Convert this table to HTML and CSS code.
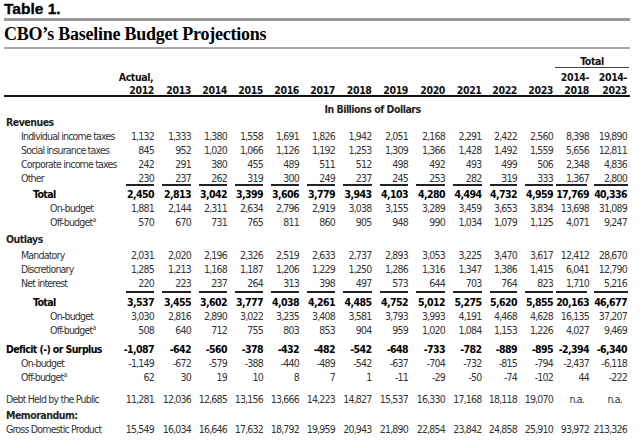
FILE: index.html
```html
<!DOCTYPE html>
<html>
<head>
<meta charset="utf-8">
<link rel="stylesheet" href="styles.css">
</head>
<body>
<div class="page">
  <div class="t1">Table 1.</div>
  <div class="rule-gray"></div>
  <div class="title">CBO’s Baseline Budget Projections</div>
  <div class="rule-light"></div>

  <div class="row head h-total"><span class="lbl"></span><span class="total-hd">Total</span></div>
  <div class="row head h-actual"><span class="lbl"></span><span class="c">Actual,</span><span></span><span></span><span></span><span></span><span></span><span></span><span></span><span></span><span></span><span></span><span></span><span>2014-</span><span>2014-</span></div>
  <div class="row head h-years"><span class="lbl"></span><span>2012</span><span>2013</span><span>2014</span><span>2015</span><span>2016</span><span>2017</span><span>2018</span><span>2019</span><span>2020</span><span>2021</span><span>2022</span><span>2023</span><span>2018</span><span>2023</span></div>
  <div class="rule-dark"></div>

  <div class="row units"><span class="lbl"></span><span class="units-txt">In Billions of Dollars</span></div>

  <div class="row sec rev"><span class="lbl">Revenues</span></div>
  <div class="row"><span class="lbl i1">Individual income taxes</span><span>1,132</span><span>1,333</span><span>1,380</span><span>1,558</span><span>1,691</span><span>1,826</span><span>1,942</span><span>2,051</span><span>2,168</span><span>2,291</span><span>2,422</span><span>2,560</span><span>8,398</span><span>19,890</span></div>
  <div class="row"><span class="lbl i1">Social insurance taxes</span><span>845</span><span>952</span><span>1,020</span><span>1,066</span><span>1,126</span><span>1,192</span><span>1,253</span><span>1,309</span><span>1,366</span><span>1,428</span><span>1,492</span><span>1,559</span><span>5,656</span><span>12,811</span></div>
  <div class="row"><span class="lbl i1">Corporate income taxes</span><span>242</span><span>291</span><span>380</span><span>455</span><span>489</span><span>511</span><span>512</span><span>498</span><span>492</span><span>493</span><span>499</span><span>506</span><span>2,348</span><span>4,836</span></div>
  <div class="row"><span class="lbl i1">Other</span><span>230</span><span>237</span><span>262</span><span>319</span><span>300</span><span>249</span><span>237</span><span>245</span><span>253</span><span>282</span><span>319</span><span>333</span><span>1,367</span><span>2,800</span></div>
  <div class="row uline"><span></span><i></i><i></i><i></i><i></i><i></i><i></i><i></i><i></i><i></i><i></i><i></i><i></i><i class="t"></i><i class="t2"></i></div>
  <div class="row bold tot1"><span class="lbl i2">Total</span><span>2,450</span><span>2,813</span><span>3,042</span><span>3,399</span><span>3,606</span><span>3,779</span><span>3,943</span><span>4,103</span><span>4,280</span><span>4,494</span><span>4,732</span><span>4,959</span><span>17,769</span><span>40,336</span></div>
  <div class="row"><span class="lbl i3">On-budget</span><span>1,881</span><span>2,144</span><span>2,311</span><span>2,634</span><span>2,796</span><span>2,919</span><span>3,038</span><span>3,155</span><span>3,289</span><span>3,459</span><span>3,653</span><span>3,834</span><span>13,698</span><span>31,089</span></div>
  <div class="row"><span class="lbl i3">Off-budget<sup class="fn">a</sup></span><span>570</span><span>670</span><span>731</span><span>765</span><span>811</span><span>860</span><span>905</span><span>948</span><span>990</span><span>1,034</span><span>1,079</span><span>1,125</span><span>4,071</span><span>9,247</span></div>

  <div class="row sec out"><span class="lbl">Outlays</span></div>
  <div class="row first"><span class="lbl i1">Mandatory</span><span>2,031</span><span>2,020</span><span>2,196</span><span>2,326</span><span>2,519</span><span>2,633</span><span>2,737</span><span>2,893</span><span>3,053</span><span>3,225</span><span>3,470</span><span>3,617</span><span>12,412</span><span>28,670</span></div>
  <div class="row"><span class="lbl i1">Discretionary</span><span>1,285</span><span>1,213</span><span>1,168</span><span>1,187</span><span>1,206</span><span>1,229</span><span>1,250</span><span>1,286</span><span>1,316</span><span>1,347</span><span>1,386</span><span>1,415</span><span>6,041</span><span>12,790</span></div>
  <div class="row"><span class="lbl i1">Net interest</span><span>220</span><span>223</span><span>237</span><span>264</span><span>313</span><span>398</span><span>497</span><span>573</span><span>644</span><span>703</span><span>764</span><span>823</span><span>1,710</span><span>5,216</span></div>
  <div class="row uline u2"><span></span><i></i><i></i><i></i><i></i><i></i><i></i><i></i><i></i><i></i><i></i><i></i><i></i><i class="t"></i><i class="t2"></i></div>
  <div class="row bold tot2"><span class="lbl i2">Total</span><span>3,537</span><span>3,455</span><span>3,602</span><span>3,777</span><span>4,038</span><span>4,261</span><span>4,485</span><span>4,752</span><span>5,012</span><span>5,275</span><span>5,620</span><span>5,855</span><span>20,163</span><span>46,677</span></div>
  <div class="row"><span class="lbl i3">On-budget</span><span>3,030</span><span>2,816</span><span>2,890</span><span>3,022</span><span>3,235</span><span>3,408</span><span>3,581</span><span>3,793</span><span>3,993</span><span>4,191</span><span>4,468</span><span>4,628</span><span>16,135</span><span>37,207</span></div>
  <div class="row"><span class="lbl i3">Off-budget<sup class="fn">a</sup></span><span>508</span><span>640</span><span>712</span><span>755</span><span>803</span><span>853</span><span>904</span><span>959</span><span>1,020</span><span>1,084</span><span>1,153</span><span>1,226</span><span>4,027</span><span>9,469</span></div>

  <div class="row bold def"><span class="lbl">Deficit (-) or Surplus</span><span>-1,087</span><span>-642</span><span>-560</span><span>-378</span><span>-432</span><span>-482</span><span>-542</span><span>-648</span><span>-733</span><span>-782</span><span>-889</span><span>-895</span><span>-2,394</span><span>-6,340</span></div>
  <div class="row"><span class="lbl i1">On-budget</span><span>-1,149</span><span>-672</span><span>-579</span><span>-388</span><span>-440</span><span>-489</span><span>-542</span><span>-637</span><span>-704</span><span>-732</span><span>-815</span><span>-794</span><span>-2,437</span><span>-6,118</span></div>
  <div class="row"><span class="lbl i1">Off-budget<sup class="fn">a</sup></span><span>62</span><span>30</span><span>19</span><span>10</span><span>8</span><span>7</span><span>1</span><span>-11</span><span>-29</span><span>-50</span><span>-74</span><span>-102</span><span>44</span><span>-222</span></div>

  <div class="row debt"><span class="lbl">Debt Held by the Public</span><span>11,281</span><span>12,036</span><span>12,685</span><span>13,156</span><span>13,666</span><span>14,223</span><span>14,827</span><span>15,537</span><span>16,330</span><span>17,168</span><span>18,118</span><span>19,070</span><span class="na">n.a.</span><span class="na">n.a.</span></div>

  <div class="row sec memo"><span class="lbl">Memorandum:</span></div>
  <div class="row"><span class="lbl">Gross Domestic Product</span><span>15,549</span><span>16,034</span><span>16,646</span><span>17,632</span><span>18,792</span><span>19,959</span><span>20,943</span><span>21,890</span><span>22,854</span><span>23,842</span><span>24,858</span><span>25,910</span><span>93,972</span><span>213,326</span></div>
</div>
</body>
</html>
```
FILE: styles.css
```css
body {
  margin: 0;
  background: #fff;
  font-family: "DejaVu Sans Condensed", "Liberation Sans", sans-serif;
  font-size: 10.5px;
  letter-spacing: -0.8px;
  color: #333;
}
.page {
  margin-left: 4px;
  width: 626px;
}
.t1 {
  font-family: "Liberation Sans", Arial, sans-serif;
  font-weight: bold;
  font-size: 15.5px;
  line-height: 18px;
  letter-spacing: 0;
  color: #000;
  -webkit-text-stroke: 0.3px #000;
}
.rule-gray {
  height: 3px;
  background: #999;
}
.title {
  font-family: "Liberation Serif", "Times New Roman", serif;
  font-weight: bold;
  font-size: 18px;
  line-height: 26px;
  letter-spacing: -0.25px;
  color: #000;
}
.rule-light {
  height: 2px;
  background: #aaa;
}
.rule-dark {
  height: 2px;
  background: #111;
}
.row {
  display: grid;
  grid-template-columns: 114px 36px 37px 36px 36px 36px 36px 36.5px 36.5px 37px 36.5px 35.5px 36px 36px 38px;
  grid-template-rows: 14px;
  height: 14px;
  line-height: 14px;
  white-space: nowrap;
}
.row > span {
  text-align: right;
  padding-top: 1px;
}
.row > .lbl {
  text-align: left;
}
.head {
  font-weight: bold;
  color: #111;
  letter-spacing: -0.4px;
}
.head > span {
  padding-top: 2px;
}
.h-total {
  margin-top: 6px;
  height: 13px;
  grid-template-rows: 13px;
  line-height: 13px;
}
.h-total > span {
  padding-top: 0;
}
.total-hd {
  grid-column: 14 / 16;
  text-align: center !important;
  border-bottom: 1px solid #444;
  margin-left: 2px;
  margin-right: -2px;
}
.h-actual .c {
  text-align: center;
}
.h-years {
  height: 13px;
  grid-template-rows: 13px;
  line-height: 13px;
}
.units {
  margin-top: 3px;
  font-weight: bold;
  color: #222;
  letter-spacing: -0.5px;
}
.units > span {
  padding-top: 2px;
}
.units-txt {
  grid-column: 2 / 16;
  text-align: center !important;
}
.sec {
  font-weight: bold;
  color: #222;
  letter-spacing: -0.5px;
}
.sec .lbl {
  padding-left: 2px;
}
.out {
  margin-top: 3px;
}
.first {
  margin-top: 2px;
}
.memo {
  margin-top: 2px;
}
.i1 {
  padding-left: 17px;
}
.i2 {
  padding-left: 29px;
}
.i3 {
  padding-left: 46px;
}
.lbl:not(.i1):not(.i2):not(.i3) {
  padding-left: 2px;
}
.bold {
  font-weight: bold;
  color: #000;
  letter-spacing: -0.6px;
}
.tot1 {
  margin-top: 0;
}
.tot2 {
  margin-top: 1px;
}
.def {
  margin-top: 5px;
}
.debt {
  margin-top: 8px;
}
.uline {
  height: 2px;
  grid-template-rows: 2px;
}
.u2 {
  margin-top: 2px;
}
.uline i {
  display: block;
  height: 2px;
  background: #222;
  margin-left: 8px;
}
.uline i.t {
  margin-left: 3px;
  margin-right: 2px;
}
.uline i.t2 {
  margin-left: 5px;
  margin-right: -1px;
}
.na {
  padding-right: 5px;
}
.fn {
  font-size: 7px;
  line-height: 0;
  vertical-align: 4px;
}
```
